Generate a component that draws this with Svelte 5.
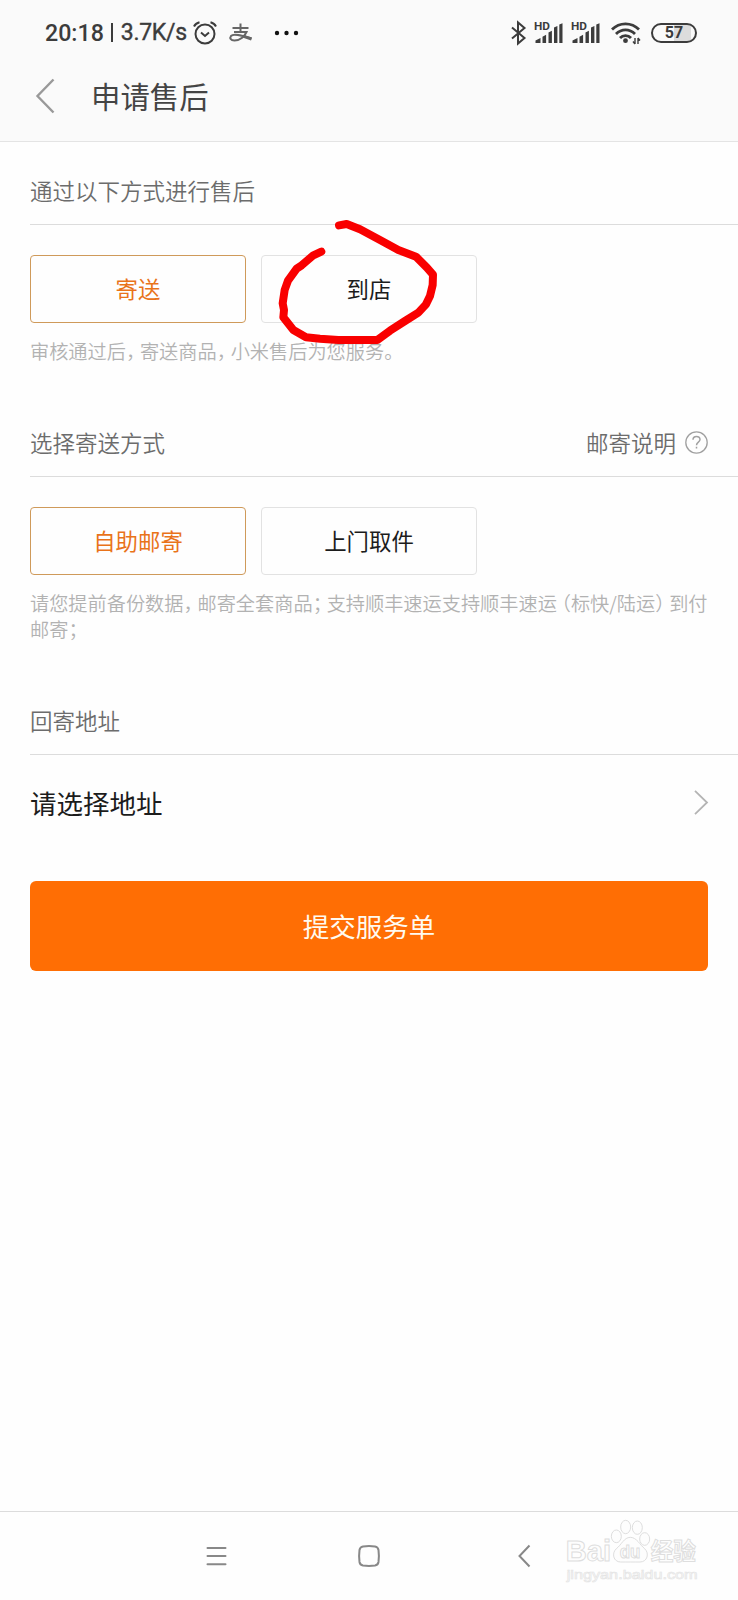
<script>
  const sendNote = '审核通过后，寄送商品，小米售后为您服务。';
  const mailNote = '请您提前备份数据，邮寄全套商品；支持顺丰速运支持顺丰速运（标快/陆运）到付邮寄；';

  const ways = ['寄送', '到店'];
  const methods = ['自助邮寄', '上门取件'];

  let way = '寄送';
  let method = '自助邮寄';

  // full-width punctuation is set narrower than the characters around it
  const split = (text) => text.split(/([，；。（）])/).filter((part) => part !== '');
  const isMark = (part) => '，；。（）'.includes(part);
</script>

<style>
  :global(body) {
    background: #fefefe;
  }

  .page {
    display: flex;
    flex-direction: column;
    position: relative;
    width: 738px;
    height: 1600px;
    overflow: hidden;
    font-family: 'Noto Sans CJK SC', sans-serif;
    font-weight: 350;
    color: #1c1c1c;
  }

  svg {
    display: block;
    flex: none;
    overflow: visible;
  }

  button {
    margin: 0;
    padding: 0;
    border: none;
    background: none;
    font: inherit;
    color: inherit;
  }

  header {
    flex: none;
    box-sizing: border-box;
    height: 142px;
    background: #fafafa;
    border-bottom: 1px solid #e4e4e4;
  }

  .status {
    display: flex;
    align-items: center;
    height: 65px;
    padding: 0 41px 0 45px;
    font-family: Roboto, sans-serif;
    font-weight: 500;
    color: #3c3c3c;
  }

  .clock {
    font-size: 23.2px;
    line-height: 28px;
    white-space: pre;
  }

  .speed {
    font-size: 23px;
    font-weight: 400;
    -webkit-text-stroke: 0.4px #3c3c3c;
    letter-spacing: -0.3px;
  }

  .bar {
    width: 2px;
    height: 19px;
    margin: 0 8px 0 7px;
    background: #3c3c3c;
  }

  .alarm {
    margin-left: 6px;
  }

  .pay {
    margin-left: 12px;
  }

  .dots {
    margin-left: 21px;
  }

  .right {
    display: flex;
    align-items: center;
    margin-left: auto;
  }

  .signal {
    margin-left: 9px;
  }

  .wifi {
    margin-left: 11px;
  }

  .battery {
    display: flex;
    align-items: center;
    justify-content: center;
    box-sizing: border-box;
    width: 46px;
    height: 20px;
    margin-left: 11px;
    border: 2px solid #3c3c3c;
    border-radius: 10px;
    background: linear-gradient(90deg, #fafafa 50%, #dcdcdc 50%, #dcdcdc 90%, #fafafa 90%);
    font-size: 16px;
    font-weight: 700;
  }

  .title {
    display: flex;
    align-items: center;
    height: 62px;
    padding-left: 36px;
  }

  h1 {
    margin: -2px 0 0 37px;
    font-size: 29.4px;
    font-weight: 400;
    line-height: 40px;
    color: #444;
  }

  section {
    margin-bottom: 46px;
    padding-left: 30px;
  }

  section:first-of-type {
    margin-top: 17px;
  }

  .heading {
    display: flex;
    align-items: center;
    justify-content: space-between;
    box-sizing: border-box;
    height: 66px;
    padding: 0 30px 4px 0;
    border-bottom: 1px solid #dcdcdc;
    font-size: 22.5px;
    color: #6c6c6c;
  }

  .help {
    display: flex;
    align-items: center;
    gap: 9px;
  }

  .help svg {
    margin-top: 2px;
  }

  .options {
    display: flex;
    gap: 15px;
    margin-top: 30px;
  }

  .option {
    box-sizing: border-box;
    width: 216px;
    height: 68px;
    border: 1px solid #e2e2e2;
    border-radius: 4px;
    padding-bottom: 3px;
    font-size: 22.4px;
    font-weight: 400;
  }

  .option.active {
    border-color: #cf9a5a;
    color: #e9731a;
  }

  .note {
    margin: 15px 26px 1px 0;
    font-size: 19.2px;
    line-height: 26px;
    color: #b2b2b2;
  }

  .mark {
    margin-right: 0.23em;
    font-feature-settings: 'halt';
  }

  .mark.open {
    margin: 0 0 0 0.23em;
  }

  .address {
    display: flex;
    align-items: center;
    justify-content: space-between;
    box-sizing: border-box;
    width: 678px;
    height: 96px;
    padding-bottom: 2px;
    font-size: 26.5px;
    font-weight: 400;
  }

  .submit {
    flex: none;
    box-sizing: border-box;
    height: 90px;
    margin: -16px 30px 0;
    padding-bottom: 2px;
    border-radius: 6px;
    background: #ff6e04;
    font-size: 26.5px;
    font-weight: 400;
    color: #fffaf0;
  }

  nav {
    display: flex;
    align-items: center;
    box-sizing: border-box;
    height: 89px;
    margin-top: auto;
    padding-left: 206px;
    border-top: 1px solid #dcdcdc;
  }

  .home {
    margin-left: 131px;
  }

  .back {
    margin-left: 138px;
  }

  .scribble {
    position: absolute;
    left: 260px;
    top: 210px;
    pointer-events: none;
  }

  .watermark {
    position: absolute;
    right: 0;
    bottom: 0;
    pointer-events: none;
  }
</style>

{#snippet note(text)}
  <p class="note">{#each split(text) as part}{#if isMark(part)}<span class="mark" class:open={part === '（'}>{part}</span>{:else}{part}{/if}{/each}</p>
{/snippet}

{#snippet signal()}
  <svg class="signal" width="28" height="22" viewBox="0 0 28 22" fill="#3c3c3c">
    <text x="-1" y="8" font-size="10.5" font-weight="700" textLength="16" lengthAdjust="spacingAndGlyphs">HD</text>
    <path d="M0.5 21v-2.5l5-2.5v5zM7.5 21v-6.3l3.6-2v8.3zM13.5 21V10.5l3.4-1.7V21zM19 21V5.500l3.4-1.6V21zM24.3 21V2.5l3.2-1.3V21z" />
  </svg>
{/snippet}

<div class="page">
  <header>
    <div class="status">
      <span class="clock">20:18</span>
      <span class="bar"></span>
      <span class="clock speed">3.7K/s</span>
      <svg class="alarm" width="24" height="24" viewBox="0 0 24 24" fill="none" stroke="#3c3c3c" stroke-width="2">
        <circle cx="12" cy="13" r="9.5" />
        <path d="M8 11.5l4 3.500 4-3.500M1 5.500C2 3.500 4 2 6.500 1.300M17.500 1.300C20 2 22 3.500 23 5.500" />
      </svg>
      <svg class="pay" width="24" height="20" viewBox="0 0 24 20" fill="none" stroke="#666" stroke-width="2">
        <path d="M3.500 5H19.500M11.500 0.500V9M5 9H17.500C15.500 13.500 11 17.500 5.500 17.500C1.500 17.500 0.500 15 2 13C4.500 10 13 12.500 22.500 15.500" />
        <path d="M14 13.200L22.500 16" stroke-width="3" />
      </svg>
      <svg class="dots" width="26" height="6" viewBox="0 0 26 6" fill="#111">
        <circle cx="3" cy="3" r="2.200" /><circle cx="12.500" cy="3" r="2.200" /><circle cx="22" cy="3" r="2.200" />
      </svg>
      <div class="right">
        <svg width="15" height="24" viewBox="0 0 15 24" fill="none" stroke="#3c3c3c" stroke-width="2">
          <path d="M1 6.500l12.500 10.500-6.500 5.500V1.500l6.500 5.500L1 17.500" />
        </svg>
        {@render signal()}
        {@render signal()}
        <svg class="wifi" width="29" height="22" viewBox="0 0 29 22" fill="none" stroke="#3c3c3c" stroke-width="2.800">
          <path d="M1 7.500C8.500 0 20.500 0 28 7.500M5 12C10.500 6.500 18.500 6.500 24 12M9 16C12 12.800 17 12.800 20 16" />
          <circle cx="14.500" cy="18.700" r="2.400" fill="#3c3c3c" stroke="none" />
          <path d="M24 16v6M22 19.500l2 2.500M27 22v-6M29 18.500l-2-2.500" stroke-width="1.400" />
        </svg>
        <span class="battery">57</span>
      </div>
    </div>
    <div class="title">
      <svg width="18" height="34" viewBox="0 0 18 34" fill="none" stroke="#999" stroke-width="2.400">
        <path d="M17.500 0.500L1.500 17l16 16.500" />
      </svg>
      <h1>申请售后</h1>
    </div>
  </header>

  <section>
    <div class="heading">通过以下方式进行售后</div>
    <div class="options">
      {#each ways as item}
        <button class="option" class:active={item === way} on:click={() => way = item}>{item}</button>
      {/each}
    </div>
    {@render note(sendNote)}
  </section>

  <section>
    <div class="heading">
      选择寄送方式
      <span class="help">
        邮寄说明
        <svg width="23" height="23" viewBox="0 0 23 23" fill="none" stroke="#a0a0a0" stroke-width="1.300">
          <circle cx="11.500" cy="11.500" r="10.700" />
          <path d="M8 8.800C8 4.300 15 4.300 15 8.600C15 11.200 11.500 11 11.500 14.200M11.500 15.800v1.800" stroke-width="1.500" />
        </svg>
      </span>
    </div>
    <div class="options">
      {#each methods as item}
        <button class="option" class:active={item === method} on:click={() => method = item}>{item}</button>
      {/each}
    </div>
    {@render note(mailNote)}
  </section>

  <section>
    <div class="heading">回寄地址</div>
    <button class="address">
      请选择地址
      <svg width="14" height="25" viewBox="0 0 14 25" fill="none" stroke="#b4b4b4" stroke-width="1.800">
        <path d="M1 0.800L13 12.500 1 24.200" />
      </svg>
    </button>
  </section>

  <button class="submit">提交服务单</button>

  <nav>
    <svg width="21" height="20" viewBox="0 0 21 20" stroke="#888" stroke-width="2" stroke-linecap="round">
      <path d="M1.500 2h18M1.500 10h18M1.500 18.300h18" />
    </svg>
    <svg class="home" width="22" height="22" viewBox="0 0 22 22" fill="none" stroke="#888" stroke-width="2">
      <path d="M5 1.500Q11 0.700 17 1.500Q20 2 20.500 5Q21.300 11 20.500 17Q20 20 17 20.500Q11 21.300 5 20.500Q2 20 1.500 17Q0.700 11 1.500 5Q2 2 5 1.500Z" />
    </svg>
    <svg class="back" width="12" height="22" viewBox="0 0 12 22" fill="none" stroke="#888" stroke-width="2">
      <path d="M11.500 0.500L1.500 11l10 10.500" />
    </svg>
  </nav>

  <svg class="scribble" width="200" height="150" viewBox="0 0 600 450" fill="none" stroke="#f90000" stroke-width="24" stroke-linecap="round" stroke-linejoin="round">
    <path d="M237 46L260 42 300 58 360 90 415 120 468 140 500 172 519 194 518 225 510 258 498 283 475 308 435 333 390 362 352 390 235 390 180 386 138 382 100 360 70 322 72 300 68 280 74 240 84 212 110 176 125 166 160 136 184 125" />
  </svg>

  <svg class="watermark" width="200" height="100" viewBox="0 0 600 300" fill="#fdfdfd" stroke="#dedede" stroke-width="3" font-family="'Liberation Sans', sans-serif" font-weight="700">
    <text x="83" y="184" font-size="88" textLength="136" lengthAdjust="spacingAndGlyphs">Bai</text>
    <ellipse cx="235" cy="109" rx="15" ry="19" />
    <ellipse cx="263" cy="81" rx="15" ry="20" />
    <ellipse cx="298" cy="83" rx="15" ry="20" />
    <ellipse cx="320" cy="117" rx="15" ry="19" />
    <path d="M277 112C296 112 306 135 320 146C335 160 328 186 306 186C290 186 264 186 248 186C226 186 220 160 235 146C250 135 258 112 277 112Z" />
    <text x="245" y="174" font-size="55" textLength="62" lengthAdjust="spacingAndGlyphs">du</text>
    <text x="338" y="180" font-size="70" font-family="'Noto Sans CJK SC', sans-serif" textLength="136" lengthAdjust="spacingAndGlyphs">经验</text>
    <text x="86" y="236" font-size="41" font-weight="400" stroke="#e4e4e4" stroke-width="2" textLength="393" lengthAdjust="spacingAndGlyphs">jingyan.baidu.com</text>
  </svg>
</div>
